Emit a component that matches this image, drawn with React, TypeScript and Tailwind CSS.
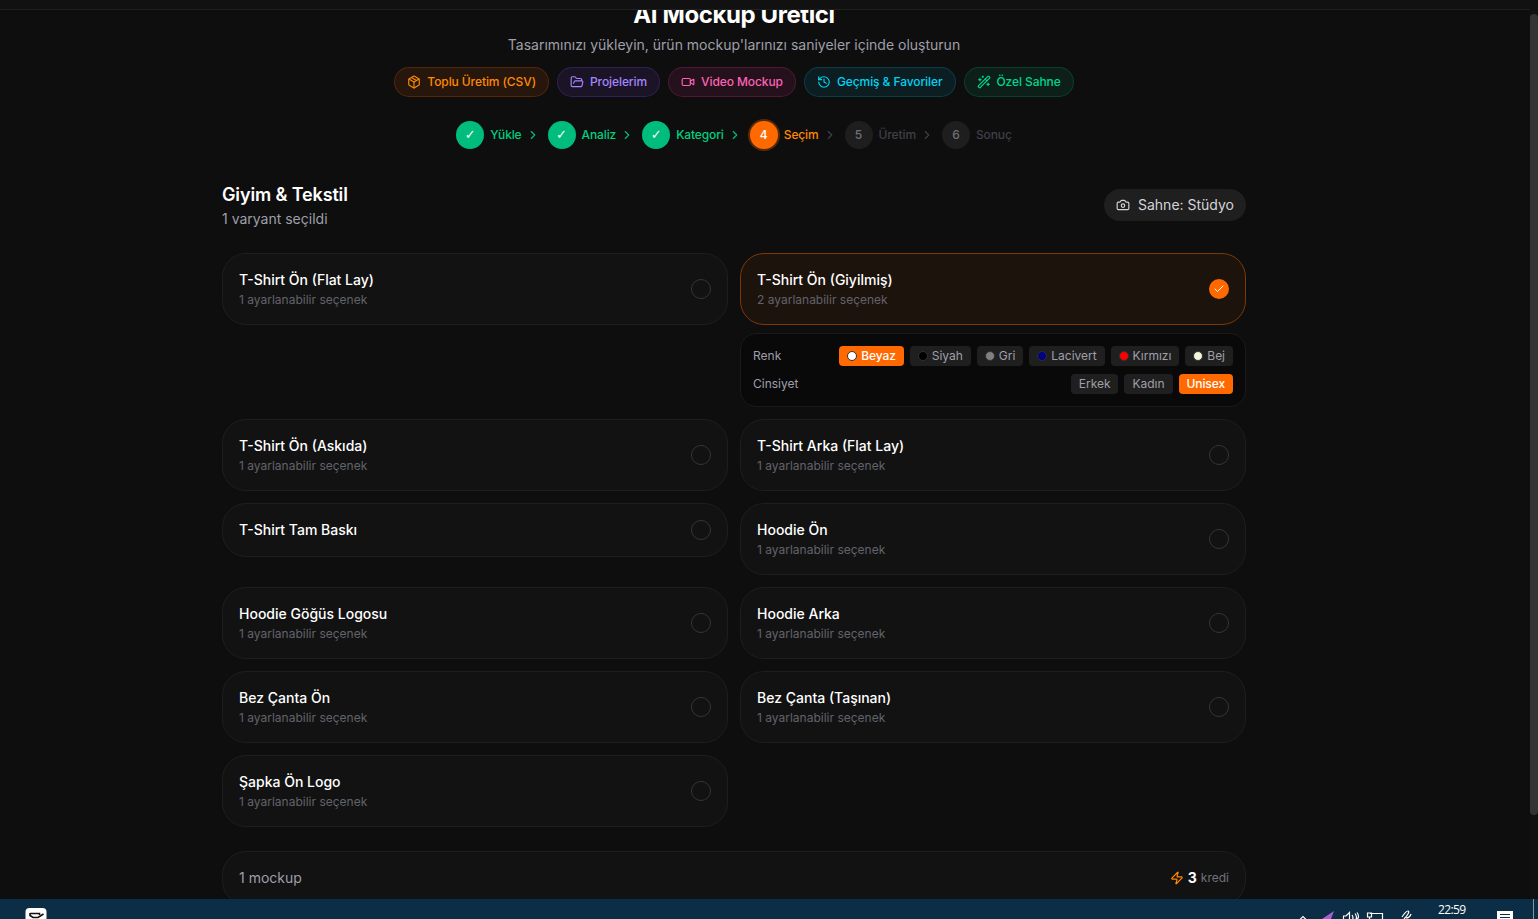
import type { ReactNode } from "react";
import {
  Camera,
  Check,
  ChevronRight,
  FolderOpen,
  History,
  Package,
  Video,
  WandSparkles,
  Zap,
} from "lucide-react";

type Variant = { name: string; options: number; selected?: boolean };

const VARIANTS: Variant[] = [
  { name: "T-Shirt Ön (Flat Lay)", options: 1 },
  { name: "T-Shirt Ön (Giyilmiş)", options: 2, selected: true },
  { name: "T-Shirt Ön (Askıda)", options: 1 },
  { name: "T-Shirt Arka (Flat Lay)", options: 1 },
  { name: "T-Shirt Tam Baskı", options: 0 },
  { name: "Hoodie Ön", options: 1 },
  { name: "Hoodie Göğüs Logosu", options: 1 },
  { name: "Hoodie Arka", options: 1 },
  { name: "Bez Çanta Ön", options: 1 },
  { name: "Bez Çanta (Taşınan)", options: 1 },
  { name: "Şapka Ön Logo", options: 1 },
];

const LINKS = [
  { label: "Toplu Üretim (CSV)", icon: Package, style: "border-[#ff6900]/20 bg-[#ff6900]/10 text-[#ff8904]" },
  { label: "Projelerim", icon: FolderOpen, style: "border-[#8e51ff]/20 bg-[#8e51ff]/10 text-[#a684ff]" },
  { label: "Video Mockup", icon: Video, style: "border-[#f6339a]/20 bg-[#f6339a]/10 text-[#fb64b6]" },
  { label: "Geçmiş & Favoriler", icon: History, style: "border-[#00b8db]/20 bg-[#00b8db]/10 text-[#00d3f2]" },
  { label: "Özel Sahne", icon: WandSparkles, style: "border-[#00bc7d]/20 bg-[#00bc7d]/10 text-[#00d492]" },
];

const STEPS = ["Yükle", "Analiz", "Kategori", "Seçim", "Üretim", "Sonuç"];
const CURRENT = 3;

const COLORS = [
  { label: "Beyaz", dot: "bg-white" },
  { label: "Siyah", dot: "bg-black" },
  { label: "Gri", dot: "bg-[#808080]" },
  { label: "Lacivert", dot: "bg-[#000080]" },
  { label: "Kırmızı", dot: "bg-[#ff0000]" },
  { label: "Bej", dot: "bg-[#f5f5dc]" },
];

function Chip({ active, children }: { active?: boolean; children: ReactNode }) {
  return (
    <button
      className={`flex h-5 items-center gap-1 rounded px-2 text-xs ${
        active ? "bg-[#ff6900] font-medium tracking-[-0.1px] text-white" : "bg-[#1f1f1f] tracking-[-0.02px] text-[#9f9fa9]"
      }`}
    >
      {children}
    </button>
  );
}

function OptionPanel() {
  return (
    <div className="mt-2 space-y-2 rounded-2xl border border-[#1a1a1a] bg-[#090909] p-3">
      <div className="flex items-center justify-between">
        <span className="text-xs text-[#9f9fa9]">Renk</span>
        <div className="flex gap-1.5">
          {COLORS.map((c) => (
            <Chip key={c.label} active={c.label === "Beyaz"}>
              <span className={`size-2.5 rounded-full border border-[#303030] ${c.dot}`} />
              {c.label}
            </Chip>
          ))}
        </div>
      </div>
      <div className="flex items-center justify-between">
        <span className="text-xs text-[#9f9fa9]">Cinsiyet</span>
        <div className="flex gap-1.5">
          <Chip>Erkek</Chip>
          <Chip>Kadın</Chip>
          <Chip active>Unisex</Chip>
        </div>
      </div>
    </div>
  );
}

function VariantCard({ variant }: { variant: Variant }) {
  const { name, options, selected } = variant;
  return (
    <div>
      <button
        className={`flex w-full items-center justify-between rounded-3xl border p-4 text-left ${
          selected ? "border-[#803704] bg-[#1c130d]" : "border-[#1e1e1e] bg-[#121212]"
        }`}
      >
        <div>
          <p className="text-sm font-medium text-white">{name}</p>
          {options > 0 && <p className="mt-0.5 text-xs text-[#62626b]">{options} ayarlanabilir seçenek</p>}
        </div>
        <span
          className={`flex size-5 items-center justify-center rounded-full ${
            selected ? "bg-[#ff6900] text-white" : "border border-[#353535]"
          }`}
        >
          {selected && <Check size={12} />}
        </span>
      </button>
      {selected && <OptionPanel />}
    </div>
  );
}

function Stepper() {
  return (
    <div className="mt-6 flex items-center justify-center">
      {STEPS.map((step, i) => {
        const done = i < CURRENT;
        const current = i === CURRENT;
        const circle = done
          ? "bg-[#00bc7d] text-white"
          : current
            ? "bg-[#ff6900] text-white ring-2 ring-[#ff6900]/30"
            : "bg-[#1e1e1e] text-[#71717b]";
        const label = done ? "text-[#00d07f]" : current ? "text-[#ff8904]" : "text-[#3f3f46]";
        return (
          <div key={step} className="flex items-center">
            <div className="flex items-center gap-1.5">
              <span className={`flex size-7 items-center justify-center rounded-full text-xs font-medium ${circle}`}>
                {done ? <span className="font-['DejaVu_Sans',sans-serif] text-[13px] font-normal">✓</span> : i + 1}
              </span>
              <span className={`text-xs font-medium tracking-[-0.12px] ${label}`}>{step}</span>
            </div>
            {i < STEPS.length - 1 && (
              <ChevronRight size={14} className={`mr-2 ml-1 ${done ? "text-[#00bc7d]" : "text-[#3f3f46]"}`} />
            )}
          </div>
        );
      })}
    </div>
  );
}

function Taskbar() {
  return (
    <footer className="flex h-5 shrink-0 items-start justify-between overflow-hidden bg-[#0b2d45]">
      <svg width="60" height="20" className="shrink-0">
        <rect x="25.500" y="9" width="21" height="20" rx="4" fill="#fff" />
        <path d="M30 14.500h9.500v1.500M30 14v2.500l3 2h5l5.500-3.500" fill="none" stroke="#111" strokeWidth="1.600" />
      </svg>
      <div className="flex h-5 items-start text-white">
        <svg width="142" height="20" fill="none" stroke="#fff" strokeWidth="1.200">
          <path d="M3.500 21l3.500-3.500 3.500 3.500" />
          <path d="M38 12L26 20h9z" fill="#a760d0" stroke="none" />
          <path d="M47 17h3l3.500-3.500V22M47.500 17v4M56 16q2 3 0 5M59 14.500q3 4 0 7M61 13.500q3 4 0 7" />
          <path d="M74 14.500h12.500V21M71.500 14h4v4h-4zM73.500 18v3" />
          <path d="M106 18c2-3 4-6 6-6s0 4-4 8M115 15c-1 3-3 4-5 4" />
        </svg>
        <span className="mt-[3px] w-[32px] font-['Open_Sans',sans-serif] text-[12px] leading-4 tracking-[-0.6px]">22:59</span>
        <svg width="68" height="20">
          <path d="M27 12h16v8H27z" fill="#fff" />
          <path d="M30 15.500h10M30 18.500h10" stroke="#0b2d45" />
          <path d="M63.500 0v20" stroke="#8495a1" />
        </svg>
      </div>
    </footer>
  );
}

export default function App() {
  return (
    <div className="flex h-[919px] flex-col overflow-hidden bg-[#0e0e0e] font-[Inter,sans-serif] text-white">
      <div className="flex min-h-0 flex-1">
        <div className="flex min-w-0 flex-1 flex-col">
          <header className="h-[10px] shrink-0 border-b border-[#202020] bg-[#111111]" />
          <div className="min-h-0 flex-1 overflow-hidden pr-[62px]">
            <main className="mx-auto -mt-[11px] w-[1024px]">
              <div className="text-center">
                <h1 className="text-2xl font-bold tracking-[-0.4px]">AI Mockup Üretici</h1>
                <p className="mt-1 text-sm text-[#9f9fa9]">
                  Tasarımınızı yükleyin, ürün mockup'larınızı saniyeler içinde oluşturun
                </p>
              </div>
              <div className="mt-3 flex justify-center gap-2">
                {LINKS.map(({ label, icon: Icon, style }) => (
                  <a
                    key={label}
                    className={`flex items-center gap-1.5 rounded-full border px-3 py-1.5 text-xs font-medium tracking-[-0.09px] ${style}`}
                  >
                    <Icon size={14} />
                    {label}
                  </a>
                ))}
              </div>
              <Stepper />
              <div className="mt-8 flex items-center justify-between">
                <div>
                  <h2 className="text-lg font-semibold tracking-[-0.13px]">Giyim & Tekstil</h2>
                  <p className="text-sm text-[#9f9fa9]">1 varyant seçildi</p>
                </div>
                <button className="flex items-center gap-2 rounded-full bg-[#1f1f1f] px-3 py-1.5 text-sm text-[#d4d4d8]">
                  <Camera size={14} />
                  Sahne: Stüdyo
                </button>
              </div>
              <div className="mt-6 grid grid-cols-2 items-start gap-3">
                {VARIANTS.map((v) => (
                  <VariantCard key={v.name} variant={v} />
                ))}
              </div>
              <div className="mt-6 flex items-center justify-between rounded-3xl border border-[#1e1e1e] bg-[#121212] p-4">
                <span className="text-sm text-[#9f9fa9]">1 mockup</span>
                <div className="flex h-5 items-center gap-1">
                  <Zap size={14} className="text-[#ff8904]" />
                  <span className="text-sm font-bold">3</span>
                  <span className="text-xs text-[#71717b]">kredi</span>
                </div>
              </div>
            </main>
          </div>
        </div>
        <div className="w-2 bg-[#111111] pt-[14px]">
          <div className="h-[801px] rounded-full bg-[#333333]" />
        </div>
      </div>
      <Taskbar />
    </div>
  );
}
